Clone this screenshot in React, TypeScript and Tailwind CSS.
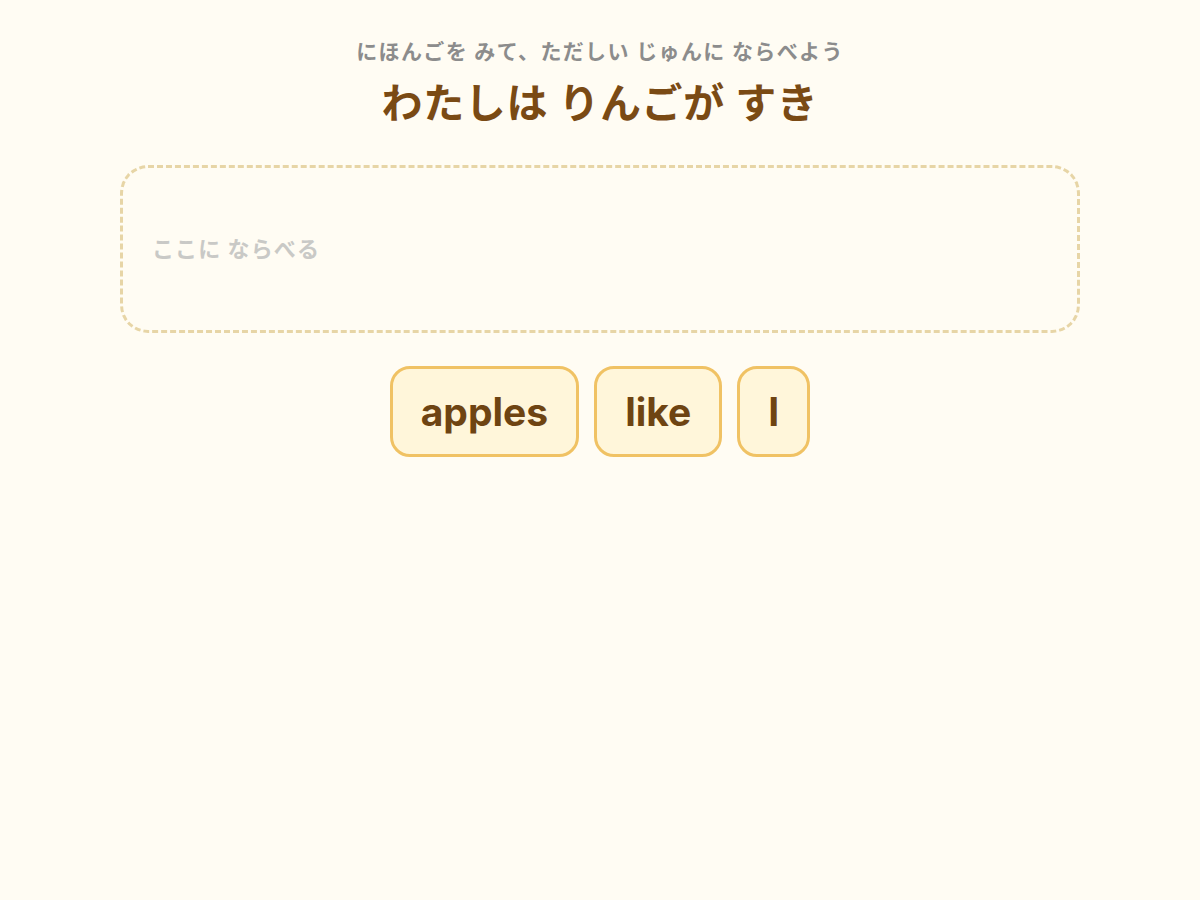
import React, { useState } from 'react';

const WORDS = ['apples', 'like', 'I'];

const tile =
  'rounded-[20px] border-[3px] border-[#f0c264] bg-[#fff6da] px-[28px] py-[14px] text-[39px] font-bold leading-[57px] text-[#6e4412]';

const App: React.FC = () => {
  const [placed, setPlaced] = useState<string[]>([]);
  const pool = WORDS.filter((w) => !placed.includes(w));

  return (
    <div
      className="min-h-screen bg-[#fffcf3] pt-[38px]"
      style={{ fontFamily: 'Inter, "Noto Sans CJK JP", sans-serif' }}
    >
      <div className="mx-auto flex w-[960px] flex-col items-center">
        {/* Instruction */}
        <p className="text-[21px] font-bold leading-[28px] tracking-[0.065em] text-[#8c8c8c]">
          にほんごを みて、ただしい じゅんに ならべよう
        </p>
        <h1 className="mt-[10px] text-[41px] font-bold leading-[54px] tracking-[0.015em] text-[#7a4a14]">
          わたしは りんごが すき
        </h1>

        {/* Answer area */}
        <div className="mt-[35px] flex h-[168px] w-full items-center gap-3 rounded-[28px] border-[3px] border-dashed border-[#e7d5a6] px-[29px]">
          {placed.length === 0 ? (
            <span className="text-[22px] font-bold tracking-[0.05em] text-[#c9c9c6]">ここに ならべる</span>
          ) : (
            placed.map((w) => (
              <button key={w} onClick={() => setPlaced(placed.filter((p) => p !== w))} className={tile}>
                {w}
              </button>
            ))
          )}
        </div>

        {/* Word tiles */}
        <div className="mt-[33px] flex gap-[15px]">
          {pool.map((w) => (
            <button key={w} onClick={() => setPlaced([...placed, w])} className={tile}>
              {w}
            </button>
          ))}
        </div>
      </div>
    </div>
  );
};

export default App;
